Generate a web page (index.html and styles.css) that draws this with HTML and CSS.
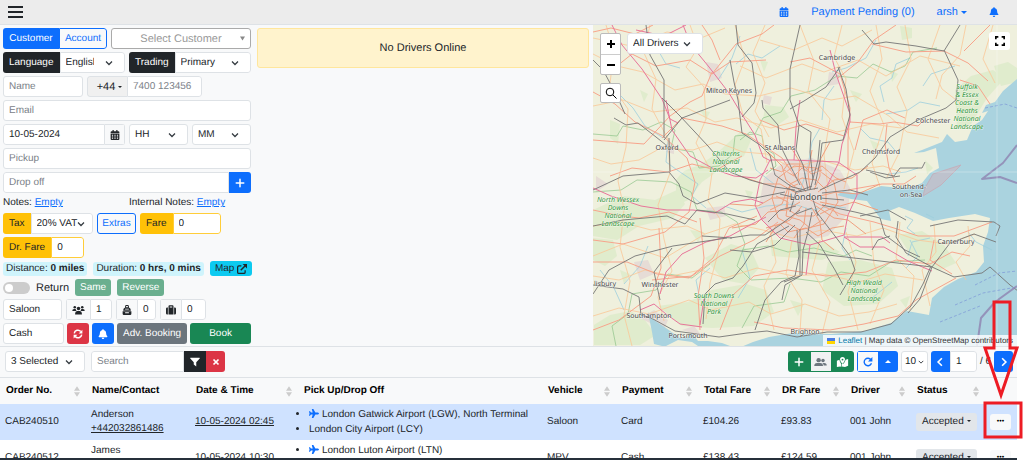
FILE: index.html
```html
<!DOCTYPE html>
<html lang="en">
<head>
<meta charset="utf-8">
<meta name="viewport" content="width=device-width, initial-scale=1">
<title>Dispatch</title>
<link rel="stylesheet" href="styles.css">
</head>
<body>
<svg class="defs" aria-hidden="true">
  <symbol id="bell" viewBox="0 0 448 512"><path d="M224 512c35.32 0 63.97-28.65 63.97-64H160.03c0 35.35 28.65 64 63.97 64zm215.39-149.71c-19.32-20.76-55.47-51.99-55.47-154.29 0-77.7-54.48-139.9-127.94-155.16V32c0-17.67-14.32-32-31.98-32s-31.98 14.33-31.98 32v20.84C118.56 68.1 64.08 130.3 64.08 208c0 102.3-36.15 133.53-55.47 154.29-6 6.45-8.66 14.16-8.61 21.71.11 16.4 12.98 32 32.1 32h383.8c19.12 0 32-15.6 32.1-32 .05-7.55-2.61-15.27-8.61-21.71z"/></symbol>
  <symbol id="plane" viewBox="0 0 576 512"><path d="M480 192H365.71L260.61 8.06A16.014 16.014 0 0 0 246.71 0h-65.5c-10.63 0-18.3 10.17-15.38 20.39L214.86 192H112l-43.2-57.6c-3.02-4.03-7.77-6.4-12.8-6.4H16.01C5.6 128-2.04 137.78.49 147.88L32 256 .49 364.12C-2.04 374.22 5.6 384 16.01 384H56c5.04 0 9.78-2.37 12.8-6.4L112 320h102.86l-49.03 171.6c-2.92 10.22 4.75 20.4 15.38 20.4h65.5c5.74 0 11.04-3.08 13.89-8.06L365.71 320H480c35.35 0 96-28.65 96-64s-60.65-64-96-64z"/></symbol>
  <symbol id="calendar" viewBox="0 0 14 16"><path fill-rule="evenodd" d="M3 0h2v2h4V0h2v2h1.500a1.500 1.500 0 0 1 1.500 1.500V5H0V3.500A1.500 1.500 0 0 1 1.500 2H3zM0 6h14v8.500a1.500 1.500 0 0 1-1.500 1.500h-11A1.500 1.500 0 0 1 0 14.500zM2 7.500V9h2V7.500zm4 0V9h2V7.500zm4 0V9h2V7.500zm-8 3V12h2v-1.500zm4 0V12h2v-1.500zm4 0V12h2v-1.500zM2 13v1.500h2V13zm4 0v1.500h2V13zm4 0v1.500h2V13z"/></symbol>
  <symbol id="plus" viewBox="0 0 16 16"><path d="M8 2v12M2 8h12" fill="none" stroke="currentColor" stroke-width="2.400" stroke-linecap="round"/></symbol>
  <symbol id="times" viewBox="0 0 16 16"><path d="M3 3l10 10M13 3L3 13" fill="none" stroke="currentColor" stroke-width="3.500"/></symbol>
  <symbol id="filter" viewBox="0 0 16 16"><path d="M1 1h14q1.400 0 .5 1.200L10 8.500V15l-4-3V8.500L.5 2.200Q-.4 1 1 1z"/></symbol>
  <symbol id="external" viewBox="0 0 16 16"><path d="M7 3H3a2 2 0 0 0-2 2v8a2 2 0 0 0 2 2h8a2 2 0 0 0 2-2v-3" fill="none" stroke="currentColor" stroke-width="2"/><path d="M6 10l7.500-7.500" fill="none" stroke="currentColor" stroke-width="2.400"/><path d="M9 0h7v7z"/></symbol>
  <symbol id="sync" viewBox="0 0 16 16"><path d="M2 7a6 6 0 0 1 10.500-3M14 9A6 6 0 0 1 3.500 12" fill="none" stroke="currentColor" stroke-width="2.400"/><path d="M15 1v6H9zM1 15V9h6z"/></symbol>
  <symbol id="redo" viewBox="0 0 16 16"><path d="M12.800 4.500A6 6 0 1 0 13.500 10" fill="none" stroke="currentColor" stroke-width="2.200"/><path d="M15 0v7H8z"/></symbol>
  <symbol id="users" viewBox="0 0 20 16"><circle cx="4" cy="3.500" r="2"/><circle cx="16" cy="3.500" r="2"/><circle cx="10" cy="5.500" r="2.800"/><path d="M0 9.500Q0 6.500 3 6.500h2.500Q6 9 7 9.500H4.500zM20 9.500q0-3-3-3h-2.500Q14 9 13 9.500h2.500zM4.500 15q0-5.500 4-5.500h3q4 0 4 5.500z"/></symbol>
  <symbol id="friends" viewBox="0 0 20 16"><circle cx="7" cy="5" r="3.500"/><circle cx="14" cy="5.500" r="2.800"/><path d="M0 14.500Q0 9.500 4.500 9.500h5q4.500 0 4.500 5zM13 9.500h3q4 0 4 4h-5q0-2.500-2-4z"/></symbol>
  <symbol id="bag" viewBox="0 0 14 16"><path fill-rule="evenodd" d="M4 4V2q0-2 2-2h2q2 0 2 2v2q3 1 3 4v1H1V8q0-3 3-4zm1.500-.5h3V2q0-.5-.5-.5H6q-.5 0-.5.5zM4 6v1.200h6V6zM0 10h14v4q0 2-2 2H2q-2 0-2-2zm4 1.500V13h6v-1.500z"/></symbol>
  <symbol id="case" viewBox="0 0 16 16"><path fill-rule="evenodd" d="M4 4V2q0-1.500 1.500-1.500h5Q12 .5 12 2v2zM6 2.500V4h4V2.500zM4 4h8v11H4z"/><path d="M3 4v11H2q-2 0-2-2V6q0-2 2-2zM13 4v11h1q2 0 2-2V6q0-2-2-2z"/></symbol>
  <symbol id="marked" viewBox="0 0 18 16"><path fill-rule="evenodd" d="M0 6l4-1.500q.3 3 3 6.500V16l-1.500-.8L0 16zM14 4.500L18 3v11l-5 2-5-1v-4h2q3.500-3 4-6.500z"/><path fill-rule="evenodd" d="M9 0a4 4 0 0 1 4 4q0 2.500-4 7-4-4.500-4-7a4 4 0 0 1 4-4zm0 2.600a1.500 1.500 0 1 0 0 3 1.500 1.500 0 0 0 0-3z"/></symbol>
  <symbol id="sort" viewBox="0 0 8 14"><path d="M4 0l4 6H0zM4 14l4-6H0z"/></symbol>
  <symbol id="left" viewBox="0 0 16 16"><path d="M11 2L5 8l6 6" fill="none" stroke="currentColor" stroke-width="2.600"/></symbol>
  <symbol id="right" viewBox="0 0 16 16"><path d="M5 2l6 6-6 6" fill="none" stroke="currentColor" stroke-width="2.600"/></symbol>
</svg>

<div class="app">
  <header class="navbar">
    <button class="burger" aria-label="Menu"><span></span><span></span><span></span></button>
    <nav class="nav-links">
      <a href="#calendar" aria-label="Calendar"><svg class="icon"><use href="#calendar"/></svg></a>
      <a href="#payments">Payment Pending (0)</a>
      <a href="#account">arsh<i class="caret"></i></a>
      <a href="#alerts" aria-label="Alerts"><svg class="icon"><use href="#bell"/></svg></a>
    </nav>
  </header>

  <main class="workspace">
    <form class="booking">
      <div class="row">
        <div class="group switcher">
          <button type="button" class="btn primary">Customer</button>
          <button type="button" class="btn outline">Account</button>
        </div>
        <select class="field grow customer" aria-label="Customer"><option>Select Customer</option></select>
      </div>
      <div class="row">
        <div class="group half">
          <label class="addon dark" for="lang">Language</label>
          <select class="field grow lang" id="lang"><option>English</option></select>
        </div>
        <div class="group half">
          <label class="addon dark" for="trading">Trading</label>
          <select class="field grow" id="trading"><option>Primary</option></select>
        </div>
      </div>
      <div class="row">
        <input class="field name" placeholder="Name" aria-label="Name">
        <div class="group phone">
          <button type="button" class="dial">+44<i class="caret"></i></button>
          <input class="field grow" placeholder="7400 123456" aria-label="Phone">
        </div>
      </div>
      <div class="row"><input class="field grow" placeholder="Email" aria-label="Email"></div>
      <div class="row">
        <div class="group half">
          <input class="field grow" value="10-05-2024" aria-label="Date">
          <button type="button" class="addon pale" aria-label="Pick date"><svg class="icon"><use href="#calendar"/></svg></button>
        </div>
        <select class="field grow time" aria-label="Hour"><option>HH</option></select>
        <select class="field grow time" aria-label="Minute"><option>MM</option></select>
      </div>
      <div class="row"><input class="field grow" placeholder="Pickup" aria-label="Pickup"></div>
      <div class="row">
        <div class="group grow">
          <input class="field grow" placeholder="Drop off" aria-label="Drop off">
          <button type="button" class="btn primary square" aria-label="Add stop"><svg class="icon"><use href="#plus"/></svg></button>
        </div>
      </div>
      <div class="row notes">
        <span class="half">Notes: <a href="#notes">Empty</a></span>
        <span class="half">Internal Notes: <a href="#internal">Empty</a></span>
      </div>
      <div class="row">
        <div class="group tax">
          <label class="addon amber" for="tax">Tax</label>
          <select class="field grow" id="tax"><option>20% VAT</option></select>
        </div>
        <button type="button" class="btn outline extras">Extras</button>
        <div class="group fare">
          <label class="addon amber" for="fare">Fare</label>
          <input class="field grow" id="fare" value="0">
        </div>
      </div>
      <div class="row">
        <div class="group fare">
          <label class="addon amber" for="drfare">Dr. Fare</label>
          <input class="field grow" id="drfare" value="0">
        </div>
      </div>
      <div class="row summary">
        <span class="badge">Distance: <b>0 miles</b></span>
        <span class="badge">Duration: <b>0 hrs, 0 mins</b></span>
        <button type="button" class="map-btn">Map <svg class="icon"><use href="#external"/></svg></button>
      </div>
      <div class="row return">
        <input type="checkbox" class="toggle" id="return">
        <label for="return">Return</label>
        <button type="button" class="btn soft">Same</button>
        <button type="button" class="btn soft">Reverse</button>
      </div>
      <div class="row">
        <input class="field vehicle" value="Saloon" aria-label="Vehicle">
        <div class="group count">
          <label class="addon pale" for="pax" aria-label="Passengers"><svg class="icon people"><use href="#users"/></svg></label>
          <input class="field grow" id="pax" value="1">
        </div>
        <div class="group count small">
          <label class="addon pale" for="bags" aria-label="Hand luggage"><svg class="icon"><use href="#bag"/></svg></label>
          <input class="field grow" id="bags" value="0">
        </div>
        <div class="group count">
          <label class="addon pale" for="cases" aria-label="Suitcases"><svg class="icon"><use href="#case"/></svg></label>
          <input class="field grow" id="cases" value="0">
        </div>
      </div>
      <div class="row tight">
        <input class="field pay" value="Cash" aria-label="Payment">
        <button type="button" class="btn red square" aria-label="Reset"><svg class="icon"><use href="#sync"/></svg></button>
        <button type="button" class="btn primary square" aria-label="Notify"><svg class="icon"><use href="#bell"/></svg></button>
        <button type="button" class="btn gray">Adv. Booking</button>
        <button type="button" class="btn green grow">Book</button>
      </div>
    </form>

    <section class="drivers"><p class="notice">No Drivers Online</p></section>

    <section class="map" aria-label="Map">
      <svg class="tiles" viewBox="593 25 424 321" preserveAspectRatio="xMidYMid slice">
        <rect class="land" x="593" y="25" width="424" height="321"/>
        <g class="wood">
          <path d="M676 180q8-12 22-14l18-12 24-22 12 6-8 18-22 12-20 14-14 18-12 6z"/>
          <path d="M593 210l30-14 32 4 22-10 8 14-12 14-34 8-22 14-24-4z"/>
          <path d="M593 238l20 2 4 16-12 10-12-6z"/>
          <path d="M594 325l16-10 20-4 14 8 12 16-16 10h-46z"/>
          <path d="M658 306l30-4 24-12 34-6 20 6 8 22-20 14-42 2-30-2z"/>
          <path d="M705 258l26-14 20 6 8 18-14 16-22-4z"/>
          <path d="M770 240h50l20 12-18 8-50-4z"/>
          <path d="M828 262l32-2 32 8 6 18-20 18-34 2-22-16z"/>
          <path d="M898 235l24-4 22 14 12 18-18 8-26-14z"/>
          <path d="M955 90l16-14 22-6 12 8-18 20-16 26-14 4z"/>
          <path d="M994 66l14-4 9 6v14l-16 4z"/>
          <path d="M900 26l12 2 0 10-10 2zM925 160l8 8-6 6z"/>
          <path d="M765 105l18 2 6 10-14 10-12-6zM610 120l10 4-2 20-8-6z"/>
          <path d="M640 90l8 4-4 8zM700 110l10 2-4 8zM850 90l12 4-6 8zM890 70l8 4-6 8zM760 60l8 2-4 10zM620 270l10 4-6 10zM690 230l14 2-6 10zM870 140l10 4-6 6zM745 190l8 2-4 8zM790 300l14 4-6 12zM900 300l10-4-4 12z"/>
        </g>
        <g class="urban">
          <path d="M764 178l20-16 28-4 28 12 10 18-2 26-20 22-28 6-28-8-14-22z"/>
          <path d="M706 62l12 2 4 14-12 4zM634 262l14-2 6 14-14 6zM640 318l14-8 14 10-4 10zM682 330l12-4 8 10zM596 176l12 8-12 8zM706 208l18-2 2 10-16 4zM829 72l10 2v10l-12 2zM668 142l6 2 0 10-8-2zM764 95l8 2-2 8-8-2z"/>
        </g>
        <g class="water">
          <path d="M1017 79l-14 12-8 11-9 3-4 8 6-2-6 9-9 6-6 14-12 2-8-8-5 8-20 8-8 3 10-1 12-4 3 20-9 5-8 10-9 4-14 1-18-2-14 5-14 2-10-2-6 4 14 4 16 2 6 8 8 10 10 2-2-10 10-4 16 6 18 8 16-3 26-4 15 4-2 14-5 14 1 16-8 10-18 7-14 8-12 11-3 17-22-4-16 12-26 8-34 3-38-1-24 4-16 5-12 5h292z"/>
          <path d="M648 312l6 8 12 8 14 10 6 0 6-5 6 8h10l14 2 8 3h-68l-8-2-2-12z"/>
        </g>
        <path class="land" d="M666 346l12-6 14 2 6 4z"/>
        <g class="stream">
          <path d="M603 84l16 10 14 14 12 18 18 12M668 140l-2 22 14 10 18 12-6 12 14 12"/>
          <path d="M724 206l18 6 24-6 28-2 18 6 20-4 14 2"/>
          <path d="M640 40l18 10 8 14 14 4M740 36l-8 22-14 22M780 46l-18 12-14-4-12 10M834 86l-10 14-2 20M876 40l-10 18-20 10-14 4M910 58l-14 6-4 14-12 8 4 16M955 66l-24 8-8 12M940 106l-20-4-12 8-22 4"/>
          <path d="M820 128l-8 14-4 24-8 26M860 128l10 10 18 4 10 12M624 284l16-18 8-20M700 300l-4-20 14-12M850 260l-8-12 4-20M872 298l20-16M906 268l12-12-8-16M930 238l-18 4-4 14M600 270l14 18 10 22M750 148l6 22 18 14M742 250l8 28-12 20M968 232l8 10 16 8"/>
          <path d="M905 216l8 4-6 8 8 6M926 214l8 4M918 168l-12 4-18 2M930 184l-14 4"/>
        </g>
        <g class="bounds">
          <path d="M593 134l24 2 6-10 20 4 18-8 14 8-4 18 22 4 6 16 20-2 14-12 2-18 20-2 8-16 18-6 10-16 24-6 22-14 20 2 16-14 18 8 14-6 8-14 24-4"/>
          <path d="M593 192l28-2 16-10 34 2 20 10 6 18 24 2 16 10 8 22-8 22 14 14 40-2 30 4 20-10 28 4 22-14 34-2"/>
          <path d="M616 346l-4-20 16-12 4-20 24-4 12-16 24 4 18-14M742 328l12-22 30-4 6-18"/>
          <path d="M740 140l10-8 12 4 2 12 10 6 2 12-10 8M742 250l26-4 20 6 26-4 30 8 12-6 16 6"/>
        </g>
        <g class="lane">
          <path d="M593 54l24 12 26 6 32 18 28-6 22 10 34 2 32-8 40 12 24-4 34 20 18 16 32 6"/>
          <path d="M606 25l8 26-4 32 18 26-2 38-8 34 6 28-4 38 10 34-6 34 8 31"/>
          <path d="M650 25l-6 28 12 26-4 30 16 30 2 34-12 32 6 34 8 32-14 26 6 24"/>
          <path d="M690 25l8 22-12 20 18 20 2 32-10 24 16 30-4 28 12 18-2 34-8 30-4 36"/>
          <path d="M593 106l30-6 30 12 34-4 28 14 22-4 34 10 30-8 36 12 34-8 30 4"/>
          <path d="M593 158l18 6 28-4 22-12 32 2 24-8 26 10 24 2 24 14 30-8 34 10 28-4 18 6"/>
          <path d="M593 226l28-4 30 8 36-4 18 8 30-10 28 6 30 8 28-8 36 6 26-8 34 12 30 4 28-10"/>
          <path d="M593 276l26 4 26-10 26 6 30-6 24 8 32-10 36 8 30-2 36 8 26-8 38 6"/>
          <path d="M593 316l26-8 30 6 40-14 22 10 38-8 22 12 34-10 34 12 30-4 28-8"/>
          <path d="M735 25l10 34-10 26 8 30 18 14 6 34M765 25l-12 28 12 30-10 28 14 26M800 25l14 36-6 30 22 28-6 36 4 34M842 25l-8 32 12 22-4 38 12 34-10 38M876 25l6 34-12 32 14 34-12 38 8 24M905 25l6 34-14 28 10 24-8 42-12 24M940 25l-12 34 14 30 18 14M966 25l-6 30-18 20-6 24M993 25l-10 34 12 24"/>
          <path d="M770 230l6 32-12 24 10 44M792 240l-6 34 16 26-2 32M820 240l-8 30 18 32-8 32M846 232l10 30-8 30 10 38M870 222l4 42 10 26-14 34M900 222l-4 36 18 18-4 34M934 224l2 28-14 18 8 36M968 226l2 20-14 16 10 18"/>
          <path d="M593 38l38 8 36-14 34 6 24-10M740 66l26 12 36-14 22 8 34-12 28 16 34-20 40 10M760 40l34 10 28-12 20 8 30-16M593 256l30-12 42 14 40-24"/>
        </g>
        <g class="aroad">
          <path d="M593 32l18-4 24 6 18-9M612 70l20-16 24 12 34-6 22 14 18-12 36-2M712 72l-10 24-12 6-20 14-26 28-51-4M712 74l24-30 26-10 12-9M720 60l-8-20-10-15"/>
          <path d="M790 62l20-4 30 16 10 34-2 32 0 30M838 78l20-16 16-22 22-15M872 44l34 8 38-1 24 12 20 18M964 51l14-14 12-12M960 80l18 6 12 18"/>
          <path d="M593 240l30 4 42-12 24-20 6-30-8-24-24-22-28-14-20-18-22-12M662 138l20-20 40 8 24 8 36 24 14 20"/>
          <path d="M593 262l34 0 30 12 32 4 24-20 16-30 28-12M652 280l40-4 28-20 34-16 24-18M593 330l26-10 32-24 10-28-2-40M700 330l-2-34 6-38-4-40"/>
          <path d="M850 122l30 2 14-2 24 4 6-6M848 190l34-6 22 0 12-8M887 124l-2 20 4 24 6 14"/>
          <path d="M806 198l34 16 34 8 20 6 24 8 36 0 38-14M720 330l14-36 20-18 34-6 38 6 40-4 30-12 34 4 22-12 18 4M754 322l30 6 46 2 34-6 34-8 18-16 40-22M905 118l-18-8-24 10-8 30M934 240l-4 20 22 14"/>
          <path d="M593 210l28 6 18 2 30-6 28 10M610 176l22-8 36 4 24-8 24 6 26-14M760 120l24 10 22-6 38 12"/>
        </g>
        <g class="city">
          <path d="M806 192l-8-14 2-16-10-16M802 192l-16-12-4-14-14-14M798 194l-18-10-16 0-24-8M796 198l-24 0-14 8-28-2M800 202l-14 8-18 2-12 12-24 4M802 206l-12 14-14 6-10 16M806 208l-2 16-10 14M812 208l8 14 2 18 12 10M816 206l18 12 14 2 18 14M820 202l20 4 14-4 24 8M820 196l16-4 22 2 22-10M818 192l16-12 18-2 16-12M814 190l6-14 0-16 10-18M810 190l-2-18 4-22"/>
          <path d="M790 184l12-6 14 2 10 10 0 14-12 12-16 0-12-8zM778 178l16-12 22 2 18 14 4 20-14 22-24 6-22-12-6-20zM770 210l12-6 6-16 10-4M820 214l12-6 6 8M784 170l10 6 8-8 10 6 10-4M776 196l12 6-2 14 14 4 10 8 12-8"/>
          <path d="M770 168l12 4 6-8 14 0 8 8 12-6 14 12 10 4M766 228l14-4 8 8 18-4 12 8 14-8 12-2"/>
        </g>
        <g class="motorway">
          <path d="M612 25l10 20 20 24 20 30 8 20 8 4M636 30l28 6 22-11M593 188l18 8 30 10 26 4 26 0 22 3 18-11 18-3 12 4M666 100l6 30 18 26 26 14 18 6 22 2 12-8"/>
          <path d="M683 25l8 20 18 22 20 26 12 20 14 22 8 22 8 4M800 100l-4 28-2 32M830 50l6 24 14 40 0 8-8 22-3 18-12 24"/>
          <path d="M793 160l45 2 19 13 0 20-9 20-4 20-34 10-30-7-18-18-7-15 5-25 10-20zM844 237l38 0 8 6"/>
          <path d="M660 294l6-22 16-18 24-12 24-6 20-11 16-8M640 310l14-6 12 10 14 10 22 3M700 325l4-26M810 245l-4 30M844 237l16 10 24 0 24 14 24 10"/>
        </g>
        <g class="rail">
          <path d="M593 60l10 10 14 26 8 18M614 118l12 7 12-2 18 14 10 8M664 138l0-38 0-20-14-25-4-30"/>
          <path d="M664 140l18-22-20-20M670 172l-1-34M682 118l48-18M736 25l2 20 14 18 4 30-2 10-12 14"/>
          <path d="M800 25l-10 44 0 31M840 67l-14 20-22 14-14 8M838 67l8 22 4 26-7 25-21 3"/>
          <path d="M862 30l12 14 12-2 30 4 28 5 16-26M944 50l14 30-2 20-10 8-28 12-28 17-15 21-15 14-40 18"/>
          <path d="M593 190l30-14 46-4 10 12 4 12 14 8 28-11 30 5 30-6M680 116l28 30 22 26 20 8 25 7 20 3"/>
          <path d="M738 100l4 33 18 12 10 10 5 20 17 12 13 3M730 60l4 22 4 18M762 100l1 8 15 17 2 20 10 20 10 20M790 100l9 25-3 25 7 15 5 25M799 125l12 7-1 20 3 28M822 143l-2 18-5 24M820 140l-2 20-8 30"/>
          <path d="M822 193l28-3 18 5M822 205l33 7 25 6 5 17 20 15 15 7M815 210l23 30 12 16 5 14-15 25M812 212l-4 20-5 18-1 25-17 10-3 15M806 232l14 13 15 25 8 15M800 210l-20 15-15 10-15 0-20 3M730 250l22 2 23-7 20-20M796 206l-16 4-12 12M820 198l24 2M786 188l12 4 20-4M780 194l16 4M812 196l6 20M796 214l16-6M790 212l6-20 16-6"/>
          <path d="M593 226l30-6 44-4 18 8 12-14 30 4 28 6M593 294l16-24 26-14 38-10 54-8M702 236l30 2"/>
          <path d="M593 285l30 4 16 8 2 18 12 4 22 12 44 6 28-4 20-2 30 6 30-5 34 0 30-8 20-18 12-22 8-18"/>
          <path d="M660 300l-6-28 18-24M703 324l2-30 10-10 18-6 10-12 14-22 32-18M755 330l10-30 16-18 14-6 4-20-2-26M800 275l0-46M784 282l16-6"/>
          <path d="M802 252l130 15M932 267l-26-14-10-16 2-16M932 267l22 10 28-4 8-6 20 18 8 6M932 267l18-24 24-9 22 8M932 267l-12 32-12 14M872 250l6-10 12-4"/>
          <path d="M860 216l28-6 18 10M930 226l28-6 36 2 6 4-4 10M866 170l28 6 6-8 22 0 3-6M870 172l16 6 14-2"/>
        </g>
        <path class="bank" d="M925 188l8-14 28-9-20 20-18 11z"/>
        <path class="ferry" d="M985 108l20-4 12 4M955 305l28-12 34-6M975 285l24-12 18-2M940 322l40-16"/>
        <path class="limit" d="M1017 145l-14 18-21 16 18-2 17 6M1017 286l-22 16-14 16-4 28"/>
        <path class="seam" d="M997 25v321M593 172h424"/>
        <g class="place">
          <text x="837" y="60">Cambridge</text><text x="729" y="93">Milton Keynes</text>
          <text x="667" y="150">Oxford</text><text x="780" y="150">St Albans</text>
          <text x="933" y="123">Colchester</text><text x="881" y="154">Chelmsford</text>
          <text x="909" y="189">Southend-</text><text x="911" y="197">on-Sea</text>
          <text x="956" y="244">Canterbury</text><text x="660" y="287">Winchester</text>
          <text x="605" y="286">lisbury</text><text x="649" y="318">Southampton</text>
          <text x="688" y="338">Portsmouth</text><text x="805" y="334">Brighton</text>
          <text class="capital" x="806" y="200">London</text>
        </g>
        <g class="park">
          <text x="967" y="89">Suffolk</text><text x="967" y="97">&amp; Essex</text><text x="967" y="105">Coast &amp;</text><text x="967" y="113">Heaths</text><text x="967" y="121">National</text><text x="967" y="129">Landscape</text>
          <text x="726" y="156">Chilterns</text><text x="726" y="164">National</text><text x="726" y="172">Landscape</text>
          <text x="618" y="202">North Wessex</text><text x="618" y="210">Downs</text><text x="618" y="218">National</text><text x="618" y="226">Landscape</text>
          <text x="714" y="298">South Downs</text><text x="714" y="306">National</text><text x="714" y="314">Park</text>
          <text x="864" y="285">High Weald</text><text x="864" y="293">National</text><text x="864" y="301">Landscape</text>
        </g>
      </svg>
      <div class="map-tools">
        <div class="zoom">
          <button type="button" aria-label="Zoom in"><svg class="icon"><path d="M5 1v8M1 5h8"/></svg></button>
          <button type="button" aria-label="Zoom out"><svg class="icon"><path d="M1 5h8"/></svg></button>
        </div>
        <button type="button" class="find" aria-label="Search map"><svg class="lens" viewBox="0 0 12 12"><circle cx="5" cy="5" r="3.800"/><path d="M8 8l3.500 3.500"/></svg></button>
      </div>
      <select class="field driver-filter" aria-label="Drivers"><option>All Drivers</option></select>
      <button type="button" class="fullscreen" aria-label="Full screen"><svg viewBox="0 0 12 12"><path d="M1 4V1h3M8 1h3v3M11 8v3H8M4 11H1V8"/></svg></button>
      <div class="credit"><svg class="flag" viewBox="0 0 8 6"><path fill="#4c7be1" d="M0 0h8v3H0z"/><path fill="#ffd500" d="M0 3h8v3H0z"/></svg><a href="#leaflet">Leaflet</a> | Map data © OpenStreetMap contributors</div>
    </section>
  </main>

  <section class="orders">
    <div class="toolbar">
      <select class="field status-filter" aria-label="Statuses"><option>3 Selected</option></select>
      <div class="group search">
        <input class="field grow" placeholder="Search" aria-label="Search">
        <button class="btn dark square" aria-label="Filter"><svg class="icon"><use href="#filter"/></svg></button>
        <button class="btn red narrow" aria-label="Clear"><svg class="icon mini"><use href="#times"/></svg></button>
      </div>
      <div class="toolbar-end">
        <div class="group">
          <button class="btn green square" aria-label="Add"><svg class="icon"><use href="#plus"/></svg></button>
          <button class="btn light square" aria-label="Drivers"><svg class="icon people"><use href="#friends"/></svg></button>
          <button class="btn green square" aria-label="Map"><svg class="icon people"><use href="#marked"/></svg></button>
        </div>
        <div class="group">
          <button class="btn outline square" aria-label="Refresh"><svg class="icon"><use href="#redo"/></svg></button>
          <button class="btn primary narrow" aria-label="Refresh options"><i class="caret up"></i></button>
        </div>
        <select class="field size" aria-label="Rows"><option>10</option></select>
        <div class="group pager">
          <button class="btn primary narrow" aria-label="Previous"><svg class="icon"><use href="#left"/></svg></button>
          <input class="field page" value="1" aria-label="Page">
        </div>
        <span class="pages">/ 6</span>
        <button class="btn primary narrow" aria-label="Next"><svg class="icon"><use href="#right"/></svg></button>
      </div>
    </div>
    <div class="table-wrap">
      <table>
        <colgroup><col class="c-order"><col class="c-name"><col class="c-date"><col><col class="c-vehicle"><col class="c-pay"><col class="c-total"><col class="c-dr"><col class="c-driver"><col class="c-status"><col class="c-more"></colgroup>
        <thead>
          <tr>
            <th><span>Order No.<svg class="sort"><use href="#sort"/></svg></span></th>
            <th>Name/Contact</th>
            <th><span>Date &amp; Time<svg class="sort"><use href="#sort"/></svg></span></th>
            <th>Pick Up/Drop Off</th>
            <th><span>Vehicle<svg class="sort"><use href="#sort"/></svg></span></th>
            <th><span>Payment<svg class="sort"><use href="#sort"/></svg></span></th>
            <th><span>Total Fare<svg class="sort"><use href="#sort"/></svg></span></th>
            <th><span>DR Fare<svg class="sort"><use href="#sort"/></svg></span></th>
            <th><span>Driver<svg class="sort"><use href="#sort"/></svg></span></th>
            <th><span>Status<svg class="sort"><use href="#sort"/></svg></span></th>
            <th></th>
          </tr>
        </thead>
        <tbody>
          <tr class="active">
            <td>CAB240510</td>
            <td>Anderson<br><a href="#call">+442032861486</a></td>
            <td><a href="#time">10-05-2024 02:45</a></td>
            <td><ul><li><svg class="plane"><use href="#plane"/></svg>London Gatwick Airport (LGW), North Terminal</li><li>London City Airport (LCY)</li></ul></td>
            <td>Saloon</td><td>Card</td><td>£104.26</td><td>£93.83</td><td>001 John</td>
            <td><button class="state">Accepted<i class="caret"></i></button></td>
            <td><button class="more" aria-label="More">•••</button></td>
          </tr>
          <tr>
            <td>CAB240512</td>
            <td>James<br><a href="#call">+442032861486</a></td>
            <td><a href="#time">10-05-2024 10:30</a></td>
            <td><ul><li><svg class="plane"><use href="#plane"/></svg>London Luton Airport (LTN)</li><li>London City Airport (LCY)</li></ul></td>
            <td>MPV</td><td>Cash</td><td>£138.43</td><td>£124.59</td><td>001 John</td>
            <td><button class="state">Accepted<i class="caret"></i></button></td>
            <td><button class="more" aria-label="More">•••</button></td>
          </tr>
        </tbody>
      </table>
    </div>
  </section>
</div>
<svg class="callout" viewBox="0 0 42 140" aria-hidden="true">
  <path d="M12 2h16v46h7L19 95 3 48h9zM3 103h36v34H3z"/>
</svg>
</body>
</html>
```
FILE: styles.css
```css
* { box-sizing: border-box; }
body { margin: 0; height: 100vh; overflow: hidden; position: relative; background: #fff; color: #212529; font: 10px/14px "Liberation Sans", Arial, sans-serif; text-rendering: geometricPrecision; }
button, input, select { font: inherit; color: inherit; margin: 0; border-radius: 0; text-rendering: inherit; }
button { padding: 0; border: 0; background: none; white-space: nowrap; }
svg { display: block; fill: currentColor; }
.defs { display: none; }
.icon { width: 10px; height: 10px; flex: none; }
.icon.people { width: 13px; }
.icon.mini { width: 8px; height: 8px; }

.app { height: calc(100vh - 6px); margin-right: 7px; display: flex; flex-direction: column; background: #f8f9fa; border-bottom: 2px solid #26303b; }

.navbar { height: 25px; flex: none; display: flex; justify-content: space-between; align-items: center; padding: 0 18px 0 8px; background: #ececec; border-bottom: 1px solid #dee2e6; }
.burger { display: grid; gap: 3px; }
.burger span { width: 15px; height: 2px; background: #212529; }
.nav-links { display: flex; align-items: center; gap: 22px; font-size: 11px; color: #0d6efd; }
.nav-links a { display: flex; align-items: center; color: inherit; text-decoration: none; }
.caret { display: inline-block; margin-left: 3px; border: 3px solid transparent; border-top-color: currentColor; border-bottom: 0; vertical-align: middle; }
.caret.up { margin: 0; border-width: 0 3px 3px; border-style: solid; border-color: transparent transparent currentColor; }

.workspace { flex: none; display: grid; grid-template-columns: 248px minmax(0, 334fr) minmax(0, 424fr); column-gap: 4px; padding-left: 3px; }
.booking { display: flex; flex-direction: column; gap: 3px; padding: 3px 0 2px; }
.row { display: flex; align-items: center; gap: 4px; }
.row.tight { gap: 3px; }
.grow { flex: 1 1 0; min-width: 0; }
.half { width: 122px; flex: none; }
.group { display: flex; border-radius: 3px; overflow: hidden; }
.field { height: 21px; padding: 0 5px; border: 1px solid #dee2e6; border-radius: 3px; background-color: #fff; outline: 0; }
.group .field { border-radius: 0 3px 3px 0; }
.group .field:first-child { border-radius: 3px 0 0 3px; }
.field::placeholder { color: #7b8188; opacity: 1; }
select.field { appearance: none; padding-right: 20px; background-repeat: no-repeat; background-position: right 11px center; background-size: 8px 8px; background-image: url("data:image/svg+xml,%3Csvg xmlns='http://www.w3.org/2000/svg' viewBox='0 0 16 16'%3E%3Cpath d='M2 5l6 6 6-6' fill='none' stroke='%23343a40' stroke-width='2.500'/%3E%3C/svg%3E"); }
select.lang { padding-right: 30px; }
select.customer { padding: 0 8px; border-color: #aaa; color: #999; font-size: 11px; text-align-last: center; background-size: 5px 5px; background-position: right 5px center; background-image: url("data:image/svg+xml,%3Csvg xmlns='http://www.w3.org/2000/svg' viewBox='0 0 10 10'%3E%3Cpath d='M0 1h10L5 9z' fill='%23888'/%3E%3C/svg%3E"); }
.btn { height: 21px; padding: 0 6px; display: flex; align-items: center; justify-content: center; border-radius: 3px; color: #fff; }
.group .btn { border-radius: 0; }
.primary { background: #0d6efd; }
.outline { border: 1px solid #0d6efd; color: #0d6efd; background: #f8f9fa; }
.red { background: #dc3545; }
.green { background: #198754; }
.gray { background: #6c757d; }
.dark { background: #212529; color: #fff; }
.light { background: #f0f1f2; color: #6c757d; border: 1px solid #198754; }
.square { width: 22px; padding: 0; }
.narrow { width: 19px; padding: 0; }
.addon { height: 21px; padding: 0 6px; display: flex; align-items: center; justify-content: center; }
.pale { background: #f8f9fa; border: 1px solid #dee2e6; border-right: 0; }
.count .pale { padding: 0 5px; }
.group .field + .pale { width: 20px; padding: 0; border-right: 1px solid #dee2e6; border-left: 0; }
.amber { background: #ffc107; }
.switcher { width: 104px; }
.switcher .btn { padding: 0; font-size: 10px; }
.switcher .primary { width: 56px; }
.group.switcher .outline { flex: 1; border-radius: 0 3px 3px 0; }
.name { width: 80px; }
.phone { width: 115px; }
.dial { width: 40px; padding-left: 4px; background: #f0f0f0; border: 1px solid #dee2e6; border-right: 0; border-radius: 3px 0 0 3px; font-size: 11px; }
.dial .caret { border-width: 2px 2px 0; }
.notes a { color: #0d6efd; }
.tax { width: 90px; }
.tax .field { padding-right: 8px; background-position: right 7px center; }
.extras { width: 39px; padding: 0; }
.fare { width: 81px; }
.fare .field { border-color: #ffcd39; }
.summary { gap: 6px; white-space: nowrap; }
.badge { padding: 0 3px; background: #cff4fc; border-radius: 3px; }
.map-btn { height: 15px; padding: 0 5px; display: flex; align-items: center; gap: 3px; background: #0dcaf0; border-radius: 3px; }
.return { gap: 6px; }
.return label { font-size: 11px; }
.toggle { appearance: none; width: 27px; height: 12px; flex: none; border-radius: 6px; background: #ccc; display: flex; align-items: center; padding-left: 2px; }
.toggle::before { content: ""; width: 8px; height: 8px; border-radius: 50%; background: #fff; }
.soft { height: 17px; padding: 0 5px; background: #6aaf8f; }
.vehicle { width: 59px; }
.count { width: 46px; }
.count.small { width: 40px; }
.pay { width: 61px; }

.drivers { padding: 3px 0 0 2px; }
.notice { margin: 0; padding: 12px; text-align: center; font-size: 11px; background: #fff3cd; border: 1px solid #ffe69c; border-radius: 3px; }

.map { position: relative; overflow: hidden; background: #aad3df; }
.tiles { width: 100%; height: 100%; position: absolute; inset: 0; fill: none; stroke-linejoin: round; }
.land { fill: #eff0dd; }
.wood { fill: #d3e9bf; opacity: .5; }
.urban { fill: #e6dcd6; }
.water { fill: #aad3df; }
.stream { stroke: #9fd0dd; stroke-width: 1; opacity: .8; }
.bounds { stroke: #8fc58b; stroke-width: 1; opacity: .7; }
.lane { stroke: #fbc898; stroke-width: 1; opacity: .8; }
.aroad { stroke: #f7a48c; stroke-width: 1; }
.city { stroke: #f0a07f; stroke-width: 1; }
.motorway { stroke: #e8759a; stroke-width: 1; }
.rail { stroke: #777; stroke-width: 1; opacity: .9; }
.bank { fill: #c3bfc9; stroke: #c9a9b5; opacity: .8; }
.ferry { stroke: #8aa9da; stroke-dasharray: 3 2; }
.limit { stroke: #8f83b0; stroke-width: 2; opacity: .8; }
.seam { stroke: #fff; opacity: .3; }
.place, .park { font: 7px "Noto Sans", sans-serif; text-anchor: middle; fill: #444; stroke: #fff; stroke-opacity: .6; stroke-width: 1; paint-order: stroke; }
.park { font-style: italic; fill: #2f963b; }
.capital { font-size: 9px; }
.map-tools { position: absolute; left: 7px; top: 8px; display: grid; gap: 8px; }
.zoom, .find { border: 1px solid #bbb; border-radius: 2px; background: #fff; }
.zoom button, .find { width: 21px; height: 20px; display: flex; align-items: center; justify-content: center; }
.zoom button { width: 19px; }
.zoom button + button { border-top: 1px solid #ccc; }
.map-tools svg { fill: none; stroke: #000; stroke-width: 2; }
.lens { width: 12px; height: 12px; }
.map-tools .lens { stroke-width: 1; }
.driver-filter { position: absolute; left: 34px; top: 8px; width: 76px; }
.fullscreen { position: absolute; right: 7px; top: 7px; width: 21px; height: 18px; display: flex; align-items: center; justify-content: center; background: #fff; border-radius: 3px; }
.fullscreen svg { width: 10px; height: 10px; fill: none; stroke: #000; stroke-width: 2; }
.credit { position: absolute; right: 0; bottom: 0; padding: 0 4px; display: flex; align-items: center; font-size: 8px; line-height: 11px; white-space: pre; background: rgba(255, 255, 255, .8); color: #333; }
.credit a { color: #0078a8; text-decoration: none; }
.flag { width: 8px; height: 6px; margin-right: 3px; }

.orders { flex: 1; min-height: 0; display: flex; flex-direction: column; border-top: 1px solid #dee2e6; }
.toolbar { flex: none; display: flex; align-items: center; gap: 6px; padding: 4px 4px 5px 5px; }
.status-filter { width: 80px; }
.search { width: 134px; }
.toolbar-end { margin-left: auto; display: flex; align-items: center; gap: 3px; }
.size { width: 27px; }
select.size { padding: 0 9px 0 3px; background-position: right 3px center; background-size: 6px 6px; }
.page { width: 27px; }
.table-wrap { flex: 1; min-height: 0; overflow: hidden; border-top: 1px solid #dee2e6; }
table { width: 100%; table-layout: fixed; border-collapse: collapse; }
.c-order { width: 86px; }
.c-name { width: 104px; }
.c-date { width: 108px; }
.c-vehicle { width: 74px; }
.c-pay { width: 82px; }
.c-total { width: 78px; }
.c-dr { width: 69px; }
.c-driver { width: 66px; }
.c-status { width: 74px; }
.c-more { width: 32px; }
th { height: 26px; padding: 0 6px; text-align: left; font-weight: bold; color: #000; white-space: nowrap; }
th span { display: flex; align-items: center; justify-content: space-between; }
.sort { width: 6px; height: 11px; color: #ccc; }
td { height: 35px; padding: 3px 5px; background: #fff; white-space: nowrap; }
.active td { background: #cfe2ff; }
td a { color: inherit; }
ul { margin: 0; padding-left: 6px; }
ul li::marker { font-size: 11px; }
.plane { width: 10px; height: 9px; display: inline-block; margin-right: 3px; color: #0d6efd; vertical-align: -1px; }
.state { height: 18px; padding: 0 6px; background: #e2e6ea; border-radius: 3px; }
.state .caret { border-width: 2px 2px 0; }
.more { width: 21px; height: 16px; background: #f8f9fa; border-radius: 3px; font-size: 7px; color: #000; }
.callout { position: absolute; right: 0; top: 300px; width: 42px; height: 140px; fill: none; stroke: #ed1c24; stroke-width: 3; }
```
